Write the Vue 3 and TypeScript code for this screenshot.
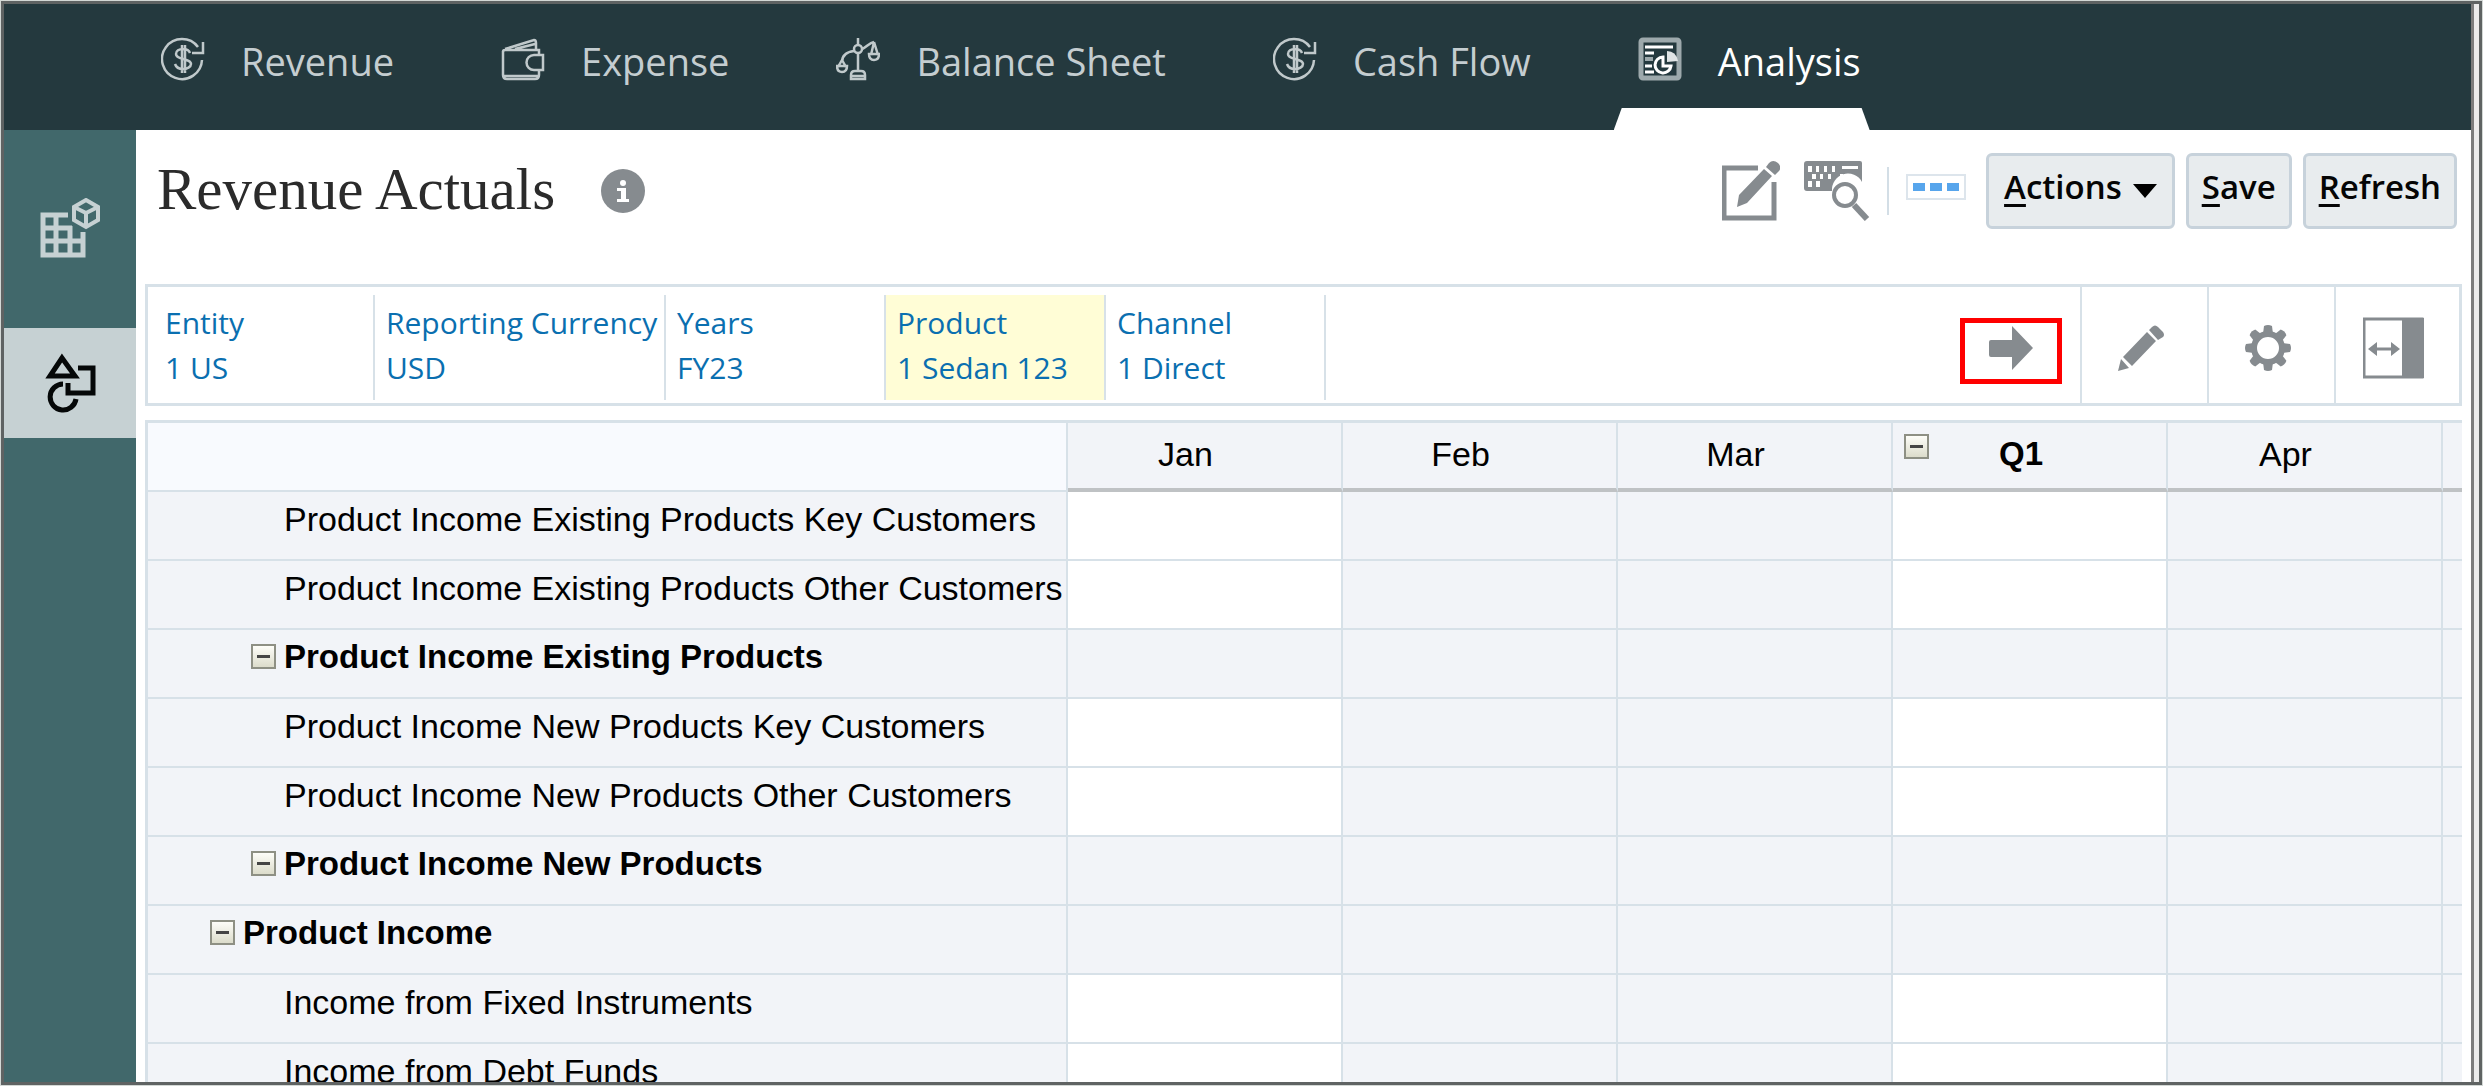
<script setup lang="ts">
type IconName = 'cycle' | 'wallet' | 'scale' | 'report'

interface NavItem {
  label: string
  icon: IconName
  active?: boolean
}

interface PovMember {
  dimension: string
  member: string
  size: 'regular' | 'wide'
  highlighted?: boolean
}

interface GridRow {
  label: string
  level: 'leaf' | 'parent' | 'root'
  editable: boolean
}

interface GridColumn {
  label: string
  quarter?: boolean
  open?: boolean
}

const navItems: NavItem[] = [
  { label: 'Revenue', icon: 'cycle' },
  { label: 'Expense', icon: 'wallet' },
  { label: 'Balance Sheet', icon: 'scale' },
  { label: 'Cash Flow', icon: 'cycle' },
  { label: 'Analysis', icon: 'report', active: true },
]

const povMembers: PovMember[] = [
  { dimension: 'Entity', member: '1 US', size: 'regular' },
  { dimension: 'Reporting Currency', member: 'USD', size: 'wide' },
  { dimension: 'Years', member: 'FY23', size: 'regular' },
  { dimension: 'Product', member: '1 Sedan 123', size: 'regular', highlighted: true },
  { dimension: 'Channel', member: '1 Direct', size: 'regular' },
]

const columns: GridColumn[] = [
  { label: 'Jan', open: true },
  { label: 'Feb' },
  { label: 'Mar' },
  { label: 'Q1', quarter: true, open: true },
  { label: 'Apr' },
  { label: '' },
]

const rows: GridRow[] = [
  { label: 'Product Income Existing Products Key Customers', level: 'leaf', editable: true },
  { label: 'Product Income Existing Products Other Customers', level: 'leaf', editable: true },
  { label: 'Product Income Existing Products', level: 'parent', editable: false },
  { label: 'Product Income New Products Key Customers', level: 'leaf', editable: true },
  { label: 'Product Income New Products Other Customers', level: 'leaf', editable: true },
  { label: 'Product Income New Products', level: 'parent', editable: false },
  { label: 'Product Income', level: 'root', editable: false },
  { label: 'Income from Fixed Instruments', level: 'leaf', editable: true },
  { label: 'Income from Debt Funds', level: 'leaf', editable: true },
]

const gearTeeth: number[] = [0, 45, 90, 135, 180, 225, 270, 315]
</script>

<template>
  <div class="frame">
    <div class="window">
      <div class="workspace">
        <nav class="topnav" aria-label="Cards">
          <a
            v-for="item in navItems"
            :key="item.label"
            href="#"
            class="nav-item"
            :class="{ active: item.active }"
          >
            <svg v-if="item.icon === 'cycle'" class="nav-icon" viewBox="0 0 44 44" aria-hidden="true">
              <path d="M41 23A20 20 0 1 1 37 10" />
              <path d="M42 5v11H31" />
              <path d="M29 16c-1-3-4-4-7-4-4 0-7 2-7 5s3 4 7 5 8 2 8 5-4 5-8 5-7-2-8-5M21 8v28M24 8v28" />
            </svg>
            <svg v-else-if="item.icon === 'wallet'" class="nav-icon" viewBox="0 0 44 44" aria-hidden="true">
              <path d="M2 14v24q0 4 4 4h28q4 0 4-4v-5M38 18v-5H4q-2 0-2 2M4 12 33 3q2 0 2 3v6M14 12l20-5M3 39h34" />
              <path d="M42 18H33a7 7 0 0 0 0 15h9z" />
            </svg>
            <svg v-else-if="item.icon === 'scale'" class="nav-icon" viewBox="0 0 44 44" aria-hidden="true">
              <path d="M22 1v8M22 16v18" />
              <circle cx="22" cy="12" r="4" />
              <path d="M18 14C10 15 6 18 6 25M26 12c5-2 7-6 12-7M6 23 2 30M6 23l4 7M38 5l-3 13M38 5l4 13" />
              <path d="M1 29h10q0 6-5 6t-5-6zM33 17h10q0 6-5 6t-5-6zM15 38q0-4 4-4h6q4 0 4 4v4H15zM15 39h14" />
            </svg>
            <svg v-else class="nav-icon report" viewBox="0 0 44 44" aria-hidden="true">
              <rect class="edge" x="3" y="3" width="38" height="38" rx="2" />
              <path d="M7 10h28M7 16h9M7 29h7M7 35h9" />
              <path class="dim" d="M7 22h8" />
              <path d="M25 20a8 8 0 1 0 8 9h-8z" />
              <path class="fill" d="M29 25V14q9 0 11 10z" />
            </svg>
            <span>{{ item.label }}</span>
          </a>
        </nav>

        <div class="body">
          <aside class="sidebar">
            <button type="button" class="side-tab" aria-label="Grids">
              <svg class="side-icon" viewBox="0 0 60 60" aria-hidden="true">
                <g fill="none" stroke="#c6d1d3" stroke-width="5">
                  <path d="M28 17H3v40h40V34M3 30h29M3 43h40M16 17v40M30 28v29" />
                  <path d="M46 2 58 9v13L46 29 34 22V9zM34 9l12 6 12-6M46 15v14" stroke-width="4" />
                </g>
              </svg>
            </button>
            <button type="button" class="side-tab selected" aria-label="Shapes">
              <svg class="side-icon" viewBox="0 0 60 60" aria-hidden="true">
                <g fill="none" stroke="#050808" stroke-width="5">
                  <path d="M22 5 35 23H10z" />
                  <path d="M38 15h15v25H28V30" />
                  <path d="M23 31A13 13 0 1 0 36 46" />
                </g>
              </svg>
            </button>
          </aside>

          <main class="content">
            <header class="titlebar">
              <h1>Revenue Actuals</h1>
              <button type="button" class="plain" aria-label="Information">
                <svg class="info" viewBox="0 0 44 44" aria-hidden="true">
                  <circle cx="22" cy="22" r="22" fill="#868b8f" />
                  <circle cx="22" cy="14" r="3" fill="#fff" />
                  <path d="M16 19h9v11h3v3H16v-3h4v-8h-4z" fill="#fff" />
                </svg>
              </button>

              <div class="tools">
                <button type="button" class="plain edit" aria-label="Edit form">
                  <svg width="58" height="60" viewBox="0 0 58 60" aria-hidden="true">
                    <path d="M36 7H2v50h50V21" fill="none" stroke="#868b8f" stroke-width="5" />
                    <path d="m15 46 2-12L42 8l8 7-25 27zM44 6l3-4q4-4 9 0 4 4 1 8l-4 4z" fill="#868b8f" />
                  </svg>
                </button>
                <button type="button" class="plain" aria-label="Find in form">
                  <svg width="66" height="60" viewBox="0 0 66 60" aria-hidden="true">
                    <path d="M3 0h53q2 0 2 2v19a16 16 0 0 0-30 9H3q-3 0-3-3V3q0-3 3-3z" fill="#868b8f" />
                    <path
                      d="M4 5h4v6H4zM12 5h3v6h-3zM20 5h3v6h-3zM28 5h3v6h-3zM38 5h16v3H38zM8 13h4v5H8zM16 13h3v5h-3zM24 13h3v5h-3zM36 13h3v5h-3zM4 20h4v6H4zM12 20h4v6h-4z"
                      fill="#fff"
                    />
                    <circle cx="41" cy="34" r="11" fill="#fff" stroke="#868b8f" stroke-width="4" />
                    <path d="m50 44 13 14" stroke="#868b8f" stroke-width="6" />
                  </svg>
                </button>
                <span class="divider"></span>
                <button type="button" class="more" aria-label="More">
                  <i></i><i></i><i></i>
                </button>
                <button type="button" class="btn actions">
                  <span><u>A</u>ctions</span>
                  <svg width="24" height="14" viewBox="0 0 24 14" aria-hidden="true"><path d="M0 0h24L12 14z" /></svg>
                </button>
                <button type="button" class="btn"><span><u>S</u>ave</span></button>
                <button type="button" class="btn"><span><u>R</u>efresh</span></button>
              </div>
            </header>

            <section class="pov" aria-label="Point of view">
              <a
                v-for="pov in povMembers"
                :key="pov.dimension"
                href="#"
                class="pov-item"
                :class="[pov.size, { highlighted: pov.highlighted }]"
              >
                <span>{{ pov.dimension }}</span>
                <span>{{ pov.member }}</span>
              </a>
              <div class="pov-tools">
                <div class="pov-tool go-cell">
                  <button type="button" class="plain go" aria-label="Go">
                    <svg width="44" height="46" viewBox="0 0 44 46" aria-hidden="true">
                      <path d="M2 15h21V1l21 22-21 22V32H2q-2 0-2-2V17q0-2 2-2z" fill="#868b8f" />
                    </svg>
                  </button>
                </div>
                <div class="pov-tool">
                  <button type="button" class="plain" aria-label="Edit members">
                    <svg width="46" height="46" viewBox="0 0 46 46" aria-hidden="true">
                      <path d="m0 46 3-12 8 9zM5 32 29 7l9 9-24 25zM31 5l3-3q3-3 6 0l5 5q2 3 0 5l-5 3z" fill="#868b8f" />
                    </svg>
                  </button>
                </div>
                <div class="pov-tool">
                  <button type="button" class="plain" aria-label="Settings">
                    <svg width="46" height="46" viewBox="0 0 46 46" aria-hidden="true">
                      <circle cx="23" cy="23" r="14" fill="none" stroke="#868b8f" stroke-width="6" />
                      <path
                        v-for="angle in gearTeeth"
                        :key="angle"
                        d="m18 9 1-8q4-2 8 0l1 8z"
                        fill="#868b8f"
                        :transform="`rotate(${angle} 23 23)`"
                      />
                    </svg>
                  </button>
                </div>
                <div class="pov-tool">
                  <button type="button" class="plain" aria-label="Toggle panel">
                    <svg width="62" height="62" viewBox="0 0 62 62" aria-hidden="true">
                      <rect x="1" y="2" width="58" height="58" fill="#fff" stroke="#868b8f" stroke-width="3" />
                      <path d="M39 1h22v60H39z" fill="#868b8f" />
                      <path d="M10 32h22" stroke="#868b8f" stroke-width="3" />
                      <path d="m5 32 9-7v14zM37 32l-9-7v14z" fill="#868b8f" />
                    </svg>
                  </button>
                </div>
              </div>
            </section>

            <table class="grid">
              <colgroup>
                <col class="col-label" />
                <col v-for="n in 5" :key="n" class="col-period" />
                <col />
              </colgroup>
              <thead>
                <tr>
                  <td class="corner"></td>
                  <th v-for="(col, i) in columns" :key="i" scope="col" :class="{ quarter: col.quarter }">
                    <div class="head-cell">
                      <button v-if="col.quarter" type="button" class="toggle" aria-label="Collapse Q1"></button>
                      <span>{{ col.label }}</span>
                    </div>
                  </th>
                </tr>
              </thead>
              <tbody>
                <tr v-for="row in rows" :key="row.label">
                  <th scope="row">
                    <div class="row-label" :class="row.level">
                      <button
                        v-if="row.level !== 'leaf'"
                        type="button"
                        class="toggle"
                        :aria-label="`Collapse ${row.label}`"
                      ></button>
                      <span>{{ row.label }}</span>
                    </div>
                  </th>
                  <td v-for="(col, i) in columns" :key="i" :class="{ open: row.editable && col.open }"></td>
                </tr>
              </tbody>
            </table>
          </main>
        </div>
      </div>
      <div class="scroll-edge"></div>
    </div>
  </div>
</template>

<style>
body {
  margin: 0;
}
</style>

<style scoped>
.frame {
  box-sizing: border-box;
  height: 100vh;
  padding: 1px;
  background: #d3d8d5;
  font-family: 'Open Sans', 'Noto Sans', sans-serif;
}

.window {
  display: flex;
  box-sizing: border-box;
  height: 100%;
  border: 3px solid #5f6363;
  overflow: hidden;
  background: #fff;
}

.workspace {
  display: flex;
  flex: 1;
  flex-direction: column;
  min-width: 0;
}

.scroll-edge {
  box-sizing: border-box;
  width: 8px;
  border-left: 3px solid #7c7c7c;
  background: #ebebeb;
}

button {
  font-family: inherit;
}

.plain {
  display: flex;
  padding: 0;
  border: 0;
  background: none;
}

/* Top navigation */
.topnav {
  display: flex;
  flex: none;
  gap: 107px;
  height: 126px;
  padding-left: 157px;
  background: #24393e;
}

.nav-item {
  position: relative;
  display: flex;
  align-items: center;
  gap: 36px;
  padding-bottom: 12px;
  color: #c4cdd0;
  font-size: 38px;
  line-height: 50px;
  text-decoration: none;
  white-space: nowrap;
}

.nav-item.active {
  color: #fff;
}

.nav-item.active::after {
  content: '';
  position: absolute;
  right: -9px;
  bottom: 0;
  left: -24px;
  height: 22px;
  background: #fff;
  clip-path: polygon(8px 0, calc(100% - 8px) 0, 100% 100%, 0 100%);
}

.nav-icon {
  width: 44px;
  height: 44px;
  margin-bottom: 4px;
  fill: none;
  stroke: #c0c9cb;
  stroke-width: 2.5;
}

.nav-icon.report {
  stroke: #fff;
  stroke-width: 3;
}

.nav-icon .edge {
  stroke: #9da9ac;
  stroke-width: 5;
}

.nav-icon .dim {
  stroke: #9da9ac;
  stroke-width: 4;
}

.nav-icon .fill {
  fill: #dfe4e5;
  stroke: none;
}

/* Left tab strip */
.body {
  display: flex;
  flex: 1;
  min-height: 0;
}

.sidebar {
  flex: none;
  width: 132px;
  padding-top: 68px;
  box-sizing: border-box;
  background: #41686b;
}

.side-tab {
  display: flex;
  align-items: center;
  justify-content: center;
  width: 132px;
  height: 110px;
  padding: 0;
  border: 0;
  background: none;
}

.side-tab:first-child {
  align-items: flex-start;
  height: 130px;
}

.side-tab.selected {
  background: #c6d1d3;
}

.side-icon {
  width: 60px;
  height: 60px;
}

/* Title and form toolbar */
.content {
  display: flex;
  flex: 1;
  flex-direction: column;
  min-width: 0;
  padding: 23px 9px 0;
}

.titlebar {
  display: flex;
  flex: none;
  align-items: center;
  height: 76px;
  margin-bottom: 55px;
  padding: 0 5px 0 12px;
}

h1 {
  margin: 0 46px 0 0;
  padding-bottom: 4px;
  color: #2b2b2b;
  font: 400 59px/68px 'Liberation Serif', serif;
  white-space: nowrap;
}

.info {
  width: 44px;
  height: 44px;
}

.tools {
  display: flex;
  align-items: center;
  margin-left: auto;
}

.edit {
  margin-right: 24px;
}

.divider {
  width: 2px;
  height: 48px;
  margin: 0 17px;
  background: #d3dee6;
}

.more {
  display: flex;
  box-sizing: border-box;
  align-items: center;
  justify-content: center;
  gap: 5px;
  width: 60px;
  height: 26px;
  margin: 0 9px 8px 0;
  padding: 0;
  border: 2px solid #dde5ec;
  background: #fff;
}

.more i {
  width: 12px;
  height: 8px;
  background: #57a5ec;
}

.btn {
  display: flex;
  box-sizing: border-box;
  align-items: center;
  gap: 11px;
  height: 76px;
  margin-left: 11px;
  padding: 0 13px 9px;
  border: 3px solid #c7d2db;
  border-radius: 6px;
  background: #e8ecee;
  color: #050505;
  font-size: 33px;
  font-weight: 600;
  line-height: 46px;
}

.btn.actions {
  padding: 0 15px 9px;
}

.btn svg {
  margin-top: 8px;
}

.btn u {
  text-decoration-thickness: 3px;
  text-underline-offset: 5px;
}

/* Point-of-view bar */
.pov {
  display: flex;
  flex: none;
  margin-bottom: 14px;
  border: 3px solid #d7e1e8;
  background: #fff;
}

.pov-item {
  display: flex;
  flex-direction: column;
  box-sizing: border-box;
  width: 220px;
  height: 105px;
  margin: 8px 0 3px;
  padding: 5px 0 0 11px;
  border-right: 2px solid #d7e1e8;
  color: #0a6fb0;
  font-size: 30px;
  line-height: 45px;
  text-decoration: none;
  white-space: nowrap;
}

.pov-item:first-child {
  width: 227px;
  padding-left: 17px;
}

.pov-item.wide {
  width: 291px;
}

.pov-item.highlighted {
  background: #fffdd6;
}

.pov-tools {
  display: flex;
  margin-left: auto;
}

.pov-tool {
  display: flex;
  align-items: center;
  justify-content: center;
  box-sizing: border-box;
  width: 127px;
  padding: 5px 8px 0 0;
  border-left: 2px solid #d7e1e8;
}

.pov-tool:last-child {
  width: 125px;
}

.pov-tool.go-cell {
  justify-content: flex-end;
  padding: 11px 18px 0 0;
  border-left: 0;
}

.go {
  box-sizing: border-box;
  align-items: center;
  justify-content: center;
  width: 102px;
  height: 66px;
  padding-bottom: 6px;
  border: 5px solid #f00;
}

/* Data grid */
.grid {
  flex: none;
  width: 100%;
  border-top: 3px solid #d7e1e8;
  border-left: 3px solid #d7e1e8;
  border-spacing: 0;
  table-layout: fixed;
  color: #000;
  font-family: 'Liberation Sans', sans-serif;
  font-size: 34px;
  line-height: 40px;
}

.col-label {
  width: 920px;
}

.col-period {
  width: 275px;
}

.grid td,
.grid th {
  box-sizing: border-box;
  height: 69px;
  padding: 0;
  border-right: 2px solid #d7e1e8;
  border-bottom: 2px solid #d7e1e8;
  background: #f2f4f8;
  font-weight: 400;
  text-align: left;
  vertical-align: top;
}

.grid tr > :last-child {
  border-right: 0;
}

.grid thead td,
.grid thead th {
  height: 69px;
}

.grid thead .corner {
  background: #f8fafe;
}

.grid thead th {
  border-bottom: 4px solid #bfc2c4;
}

.grid td.open {
  background: #fff;
}

.head-cell {
  display: flex;
  justify-content: center;
  padding: 11px 38px 0 0;
}

.quarter .head-cell {
  justify-content: flex-start;
  gap: 70px;
  padding-left: 11px;
}

.grid .quarter {
  font-size: 33px;
  font-weight: 700;
}

.row-label {
  display: flex;
  gap: 8px;
  padding-top: 7px;
  white-space: nowrap;
}

.row-label.leaf {
  padding-left: 136px;
}

.row-label.parent {
  padding-left: 103px;
  font-size: 33px;
  font-weight: 700;
}

.row-label.root {
  padding-left: 62px;
  font-size: 33px;
  font-weight: 700;
}

.toggle {
  display: flex;
  flex: none;
  align-items: center;
  justify-content: center;
  box-sizing: border-box;
  width: 25px;
  height: 25px;
  margin-top: 7px;
  padding: 0;
  border: 2px solid #8e9084;
  background: linear-gradient(#fdfdf8, #dcdccb);
}

.quarter .toggle {
  margin-top: 0;
}

.toggle::before {
  content: '';
  width: 13px;
  height: 3px;
  background: #454545;
}
</style>
